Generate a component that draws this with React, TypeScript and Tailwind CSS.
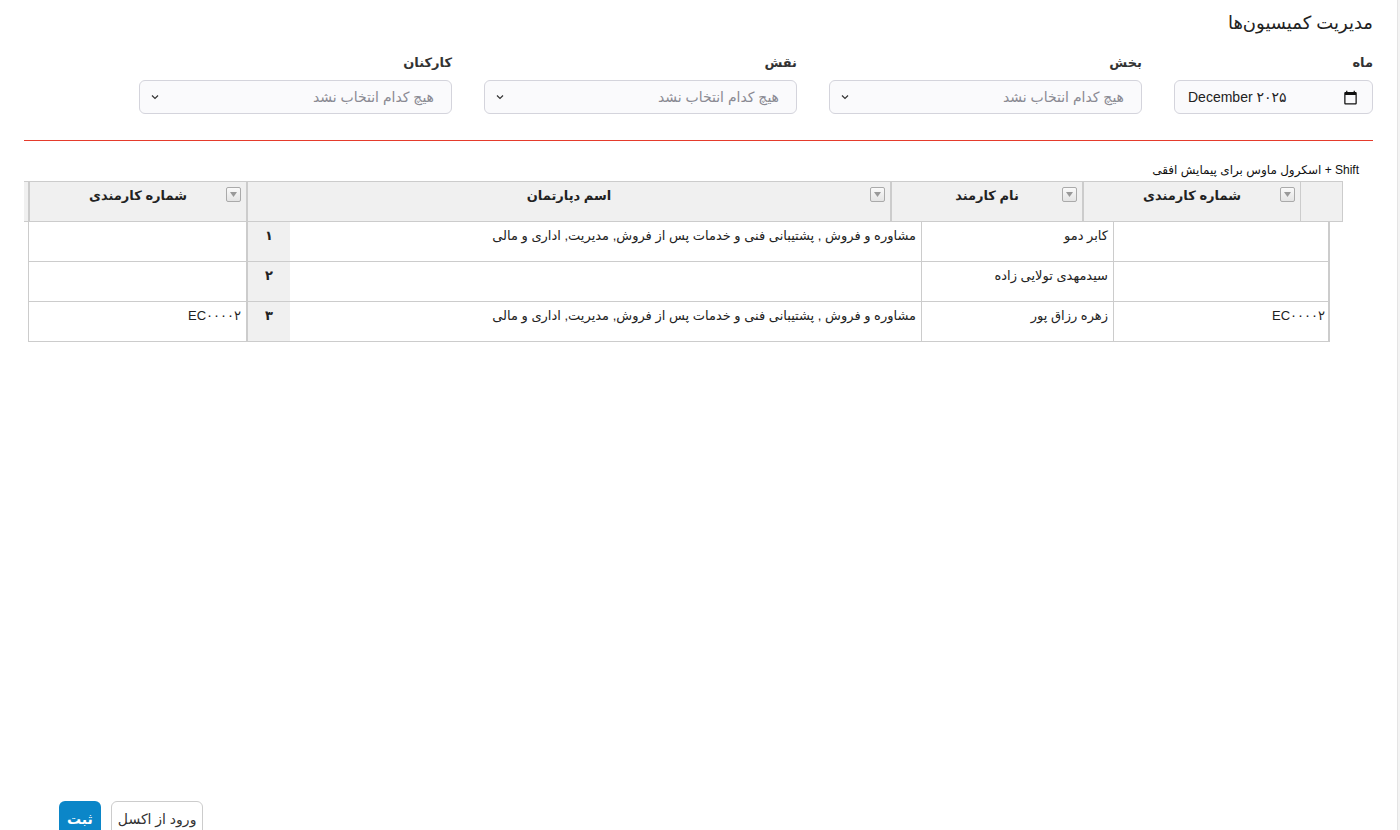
import React from "react"

const font = { fontFamily: '"Liberation Sans", "DejaVu Sans", sans-serif' }

const dept = "مشاوره و فروش , پشتیبانی فنی و خدمات پس از فروش, مدیریت, اداری و مالی"

const rows = [
  { code: "", name: "کابر دمو", dept, num: "۱", code2: "" },
  { code: "", name: "سیدمهدی تولایی زاده", dept: "", num: "۲", code2: "" },
  { code: "EC۰۰۰۰۲", name: "زهره رزاق پور", dept, num: "۳", code2: "EC۰۰۰۰۲" },
]

function Chevron() {
  return (
    <svg width="12" height="12" viewBox="0 0 12 12" fill="none" stroke="#333" strokeWidth="1.2">
      <path d="M3 4.5 6 7.5 9 4.5" />
    </svg>
  )
}

function CalendarIcon() {
  return (
    <svg width="15" height="15" viewBox="0 0 24 24" fill="#111">
      <path d="M20 3h-1V1h-2v2H7V1H5v2H4c-1.1 0-2 .9-2 2v16c0 1.1.9 2 2 2h16c1.1 0 2-.9 2-2V5c0-1.1-.9-2-2-2zm0 18H4V8h16v13z" />
    </svg>
  )
}

function FilterButton() {
  return (
    <span className="absolute right-[5px] top-[5px] flex h-[15px] w-[15px] items-center justify-center rounded-[2px] border border-[#aaa] bg-gradient-to-b from-[#fafafa] to-[#e4e4e4]">
      <svg width="7" height="5" viewBox="0 0 7 5" fill="#999">
        <path d="M0 0h7L3.5 5z" />
      </svg>
    </span>
  )
}

function SelectBox({ label }: { label: string }) {
  return (
    <div className="w-[313px]">
      <div className="mb-[9px] text-[13px] font-bold leading-[16px] text-[#333]">{label}</div>
      <div className="flex h-[34px] items-center justify-between rounded-[6px] border border-[#d4d4dc] bg-[#fafafc] pl-[9px] pr-[17px]">
        <span className="text-[14px] text-[#8a8a93]">هیچ کدام انتخاب نشد</span>
        <Chevron />
      </div>
    </div>
  )
}

export default function App() {
  return (
    <div dir="rtl" className="flex min-h-screen bg-white text-[#222]" style={font}>
      {/* page scrollbar strip */}
      <div className="w-[3px] shrink-0 border-l border-[#e4e4e4] bg-[#f3f3f3]" />

      <main className="flex-1 px-6 pt-[10px]">
        <h1 className="text-[18px] font-normal leading-[26px] text-[#222]">مدیریت کمیسیون‌ها</h1>

        {/* Filters */}
        <div className="mt-[19px] flex gap-x-8">
          <div className="w-[199px]">
            <div className="mb-[9px] text-[13px] font-bold leading-[16px] text-[#333]">ماه</div>
            <div
              dir="ltr"
              className="flex h-[34px] items-center justify-between rounded-[6px] border border-[#d4d4dc] bg-[#fafafc] pl-[13px] pr-[14px]"
            >
              <span className="text-[14px] text-[#222]">December ۲۰۲۵</span>
              <CalendarIcon />
            </div>
          </div>
          <SelectBox label="بخش" />
          <SelectBox label="نقش" />
          <SelectBox label="کارکنان" />
        </div>

        <div className="mt-[26px] h-px bg-[#e53b2c]" />

        {/* Grid */}
        <div className="h-[660px] pt-[21px]">
          <div className="pr-[14px] text-[12px] leading-[16px] text-[#111]">Shift + اسکرول ماوس برای پیمایش افقی</div>

          {/* Header */}
          <div className="mr-[30px] mt-[3px] flex h-[41px] border-y border-[#ccc] bg-[#f0f0f0] text-[13px] font-bold">
            <div className="w-[43px] shrink-0 border-x border-[#ccc]" />
            <div className="relative w-[218px] shrink-0 border-l-2 border-[#ccc] pt-[5px] text-center leading-[18px]">
              شماره کارمندی
              <FilterButton />
            </div>
            <div className="relative w-[192px] shrink-0 border-l-2 border-[#ccc] pt-[5px] text-center leading-[18px]">
              نام کارمند
              <FilterButton />
            </div>
            <div className="relative w-[644px] shrink-0 border-l-2 border-[#ccc] pt-[5px] text-center leading-[18px]">
              اسم دپارتمان
              <FilterButton />
            </div>
            <div className="relative w-[218px] shrink-0 border-l-2 border-[#ccc] pt-[5px] text-center leading-[18px]">
              شماره کارمندی
              <FilterButton />
            </div>
            <div className="flex-1" />
          </div>

          {/* Body */}
          <div className="ml-[4px] mr-[43px] border-r-2 border-[#ccc] text-[13px]">
            {rows.map((r, i) => (
              <div key={i} className="flex h-[40px] border-b border-[#ccc]">
                <div className="w-[215px] shrink-0 border-l border-[#ccc] pr-[3px] pt-[4px] leading-[20px]">{r.code}</div>
                <div className="w-[192px] shrink-0 border-l border-[#ccc] pr-[5px] pt-[4px] leading-[20px]">{r.name}</div>
                <div className="w-[631px] shrink-0 pr-[5px] pt-[4px] leading-[20px]">{r.dept}</div>
                <div className="w-[44px] shrink-0 border-l-2 border-[#ccc] bg-[#f0f0f0] pt-[4px] text-center font-bold leading-[20px]">
                  {r.num}
                </div>
                <div className="flex-1 border-l border-[#ccc] pr-[5px] pt-[4px] leading-[20px]">{r.code2}</div>
              </div>
            ))}
          </div>
        </div>

        {/* Actions */}
        <div className="flex justify-end gap-[10px] pl-[35px]">
          <button className="h-[36px] rounded-[6px] border border-[#ccc] bg-white px-[6px] text-[14px] text-[#333]">
            ورود از اکسل
          </button>
          <button className="h-[36px] rounded-[6px] bg-[#0b86c8] px-[8px] text-[14px] font-bold text-white">ثبت</button>
        </div>
      </main>
    </div>
  )
}
